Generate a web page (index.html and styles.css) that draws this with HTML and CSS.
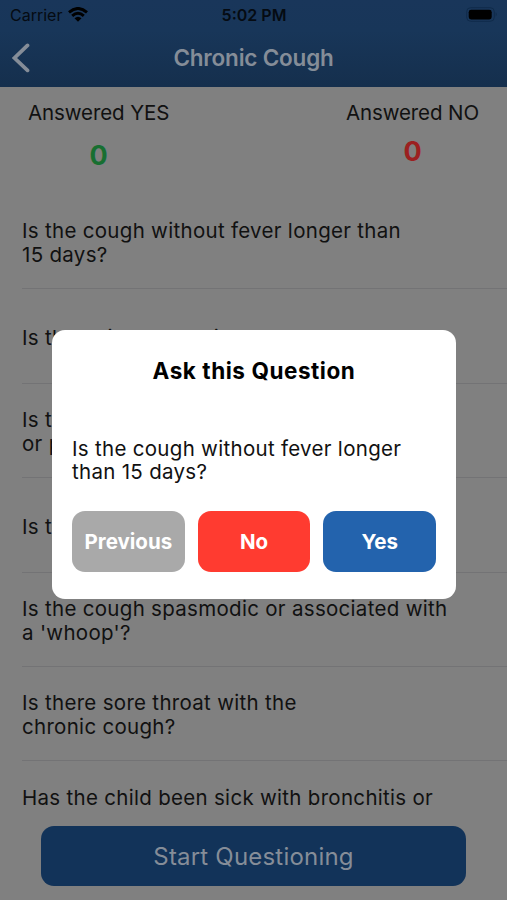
FILE: index.html
```html
<!DOCTYPE html>
<html lang="en">
<head>
<meta charset="utf-8">
<title>Chronic Cough</title>
<link rel="stylesheet" href="styles.css">
</head>
<body>
<div class="screen">
  <header class="header">
    <div class="status">
      <div class="carrier"><span class="carrier-name">Carrier</span>
        <svg class="wifi" width="20" height="15" viewBox="0 0 20 15"><g fill="none" stroke="#000" stroke-width="2.9"><path d="M1 5.4Q10-2.5 19 5.4"/><path d="M4.2 8.9Q10 3.6 15.8 8.9"/></g><path d="M6.5 11.2Q10 8.2 13.5 11.2L10 14.8Z"/></svg>
      </div>
      <span class="time">5:02 PM</span>
      <svg class="battery" width="32" height="15" viewBox="0 0 32 15"><rect x=".7" y=".7" width="27.6" height="13.6" rx="4" fill="none" stroke="#102b4a"/><rect x="2.7" y="2.8" width="23" height="9.6" rx="2.4"/><path d="M29.7 5.2q2 2.2 0 4.4z" fill="#102b4a"/></svg>
    </div>
    <nav class="nav">
      <svg class="back" width="18" height="30" viewBox="0 0 18 30"><path d="M15.5 2.4 2.5 15l13 12.4" fill="none" stroke="#858d98" stroke-width="3.7" stroke-linecap="round" stroke-linejoin="miter"/></svg>
      <h1 class="title">Chronic Cough</h1>
    </nav>
  </header>
  <section class="scores">
    <div class="score yes"><span>Answered YES</span><b>0</b></div>
    <div class="score no"><span>Answered NO</span><b>0</b></div>
  </section>
  <ul class="list">
    <li><p>Is the cough without fever longer than<br>15 days?</p></li>
    <li><p>Is the pain too persistent or recent</p></li>
    <li><p>Is there<br>or persistent?</p></li>
    <li><p>Is the cough dry?</p></li>
    <li><p>Is the cough spasmodic or associated with<br>a 'whoop'?</p></li>
    <li><p>Is there sore throat with the<br>chronic cough?</p></li>
    <li><p>Has the child been sick with bronchitis or<br>pneumonia</p></li>
  </ul>
  <footer class="footer"><button class="start">Start Questioning</button></footer>
  <div class="dialog" role="dialog">
    <h2>Ask this Question</h2>
    <p>Is the cough without fever longer<br>than 15 days?</p>
    <div class="actions">
      <button class="previous">Previous</button>
      <button class="deny">No</button>
      <button class="confirm">Yes</button>
    </div>
  </div>
</div>
</body>
</html>
```
FILE: styles.css
```css
* { box-sizing: border-box; margin: 0; padding: 0; }
body { font-family: Inter, "Liberation Sans", sans-serif; background: #808080; color: #111; }
button { border: 0; font-family: inherit; }
.screen { position: relative; width: 507px; height: 900px; overflow: hidden; display: flex; flex-direction: column; background: #808080; }
.header { height: 87px; flex: none; background: linear-gradient(#19365a, #183659 35%, #152f4d); }
.status { height: 29px; display: grid; grid-template-columns: 1fr auto 1fr; align-items: center; padding: 0 9px 0 10px; color: #050b12; }
.carrier { display: flex; align-items: center; gap: 6px; font-size: 16px; }
.time { font-size: 16px; font-weight: 600; }
.battery { justify-self: end; }
.nav { height: 58px; display: grid; grid-template-columns: 40px 1fr 40px; align-items: center; }
.back { margin-left: 12px; }
.title { text-align: center; font-size: 22.5px; font-weight: 600; letter-spacing: -0.2px; color: #858d98; transform: translateY(-1px); }
.scores { height: 108px; flex: none; display: flex; justify-content: space-between; padding: 14px 28px 0 28px; }
.score { display: flex; flex-direction: column; align-items: center; font-size: 20.5px; line-height: 24px; letter-spacing: -0.1px; }
.score b { font-size: 27px; line-height: 32px; font-weight: 700; }
.yes b { color: #176f31; margin-top: 15px; }
.no b { color: #9c2020; margin-top: 11px; }
.list { list-style: none; height: 617px; flex: none; overflow: hidden; padding-left: 22px; }
.list li { height: 94.4px; display: flex; align-items: center; border-bottom: 1px solid #737375; padding-top: 3px; }
.list p, .dialog p { font-size: 20.5px; line-height: 23.7px; letter-spacing: 0.3px; white-space: nowrap; }
.footer { padding: 14px 41px; }
.start { display: block; width: 425px; height: 60px; border-radius: 13px; background: #123359; color: #858d98; font-size: 24px; letter-spacing: 0.2px; }
.dialog { position: absolute; left: 52px; top: 329.5px; width: 404px; height: 269px; border-radius: 13px; background: #fff; padding: 26px 20px 27px; display: flex; flex-direction: column; }
.dialog h2 { text-align: center; font-size: 22.5px; line-height: 30px; font-weight: 700; letter-spacing: 0.55px; color: #000; }
.dialog p { margin-top: 51px; }
.actions { margin-top: auto; display: grid; grid-template-columns: repeat(3, 1fr); gap: 13px; }
.actions button { height: 61px; border-radius: 13px; color: #fff; font-size: 20.5px; font-weight: 700; }
.previous { background: #a9a9a9; }
.deny { background: #ff3b30; }
.confirm { background: #2363ad; }
```
